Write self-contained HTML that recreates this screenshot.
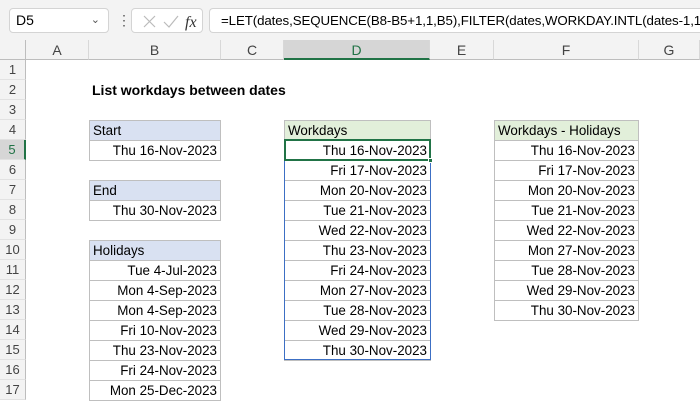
<!DOCTYPE html><html><head><style>
body{margin:0;width:700px;height:400px;overflow:hidden;background:#fff;font-family:"Liberation Sans",sans-serif;position:relative}
div{position:absolute;box-sizing:border-box}
.t{font-size:13px;line-height:19px;white-space:nowrap;color:#000}
.c{border:1px solid #bfbfbf;height:21px;font-size:13.4px;line-height:19px;white-space:nowrap;padding:0 3px}
.r{text-align:right}
.b{background:#d9e1f2}.g{background:#e2efda}
.ch{top:40px;height:20px;font-size:14px;color:#444;text-align:center;line-height:20px;border-right:1px solid #d8d8d8;border-bottom:1px solid #bdbdbd;background:#f3f3f3}
.rh{left:0;width:26px;height:20px;font-size:13px;color:#444;text-align:center;line-height:20px;background:#f3f3f3;border-bottom:1px solid #e2e2e2;border-right:1px solid #bdbdbd}
</style></head><body>
<div style="left:0;top:0;width:700px;height:40px;background:#f3f3f3"></div>
<div style="left:9px;top:8px;width:100px;height:25px;background:#fff;border:1px solid #d4d4d4;border-radius:4px;font-size:14px;line-height:23px;padding-left:6px">D5<span style="position:absolute;right:8px;top:0;font-size:11px;color:#555">&#8964;</span></div>
<div style="left:117px;top:12px;width:4px;height:16px;font-size:14px;line-height:16px;color:#555">&#8942;</div>
<div style="left:131px;top:8px;width:72px;height:25px;background:#fff;border:1px solid #d4d4d4;border-radius:4px">
<svg width="72" height="25" style="position:absolute;left:0;top:0"><path d="M12 7l11 11M23 7L12 18" stroke="#bbb" stroke-width="1.2" fill="none"/><path d="M32 13l5 5 9-11" stroke="#bbb" stroke-width="1.2" fill="none"/><text x="53" y="18" font-family="Liberation Serif" font-style="italic" font-size="16" fill="#333">fx</text></svg></div>
<div style="left:209px;top:8px;width:491px;height:25px;overflow:hidden;background:#fff;border:1px solid #d4d4d4;border-right:none;border-radius:4px 0 0 4px;font-size:13.3px;letter-spacing:-0.1px;line-height:23px;padding-left:11px;white-space:nowrap">=LET(dates,SEQUENCE(B8-B5+1,1,B5),FILTER(dates,WORKDAY.INTL(dates-1,1,1),</div>
<div style="left:0;top:40px;width:26px;height:20px;background:#f3f3f3;border-right:1px solid #bdbdbd;border-bottom:1px solid #bdbdbd"></div>
<div class="ch" style="left:26px;width:63px">A</div>
<div class="ch" style="left:89px;width:132px">B</div>
<div class="ch" style="left:221px;width:63px">C</div>
<div class="ch" style="left:284px;width:146px;background:#d6d6d6;border-bottom:2px solid #217346;color:#217346">D</div>
<div class="ch" style="left:430px;width:64px">E</div>
<div class="ch" style="left:494px;width:145px">F</div>
<div class="ch" style="left:639px;width:61px">G</div>
<div class="rh" style="top:60px">1</div><div class="rh" style="top:80px">2</div><div class="rh" style="top:100px">3</div><div class="rh" style="top:120px">4</div>
<div class="rh" style="top:140px;background:#d6d6d6;border-right:2px solid #217346;color:#217346">5</div>
<div class="rh" style="top:160px">6</div><div class="rh" style="top:180px">7</div><div class="rh" style="top:200px">8</div><div class="rh" style="top:220px">9</div><div class="rh" style="top:240px">10</div><div class="rh" style="top:260px">11</div><div class="rh" style="top:280px">12</div><div class="rh" style="top:300px">13</div><div class="rh" style="top:320px">14</div><div class="rh" style="top:340px">15</div><div class="rh" style="top:360px">16</div><div class="rh" style="top:380px">17</div>
<div class="t" style="left:92px;top:81px;font-weight:bold;font-size:14px">List workdays between dates</div>
<div class="c b" style="left:89px;top:120px;width:132px">Start</div>
<div class="c r" style="left:89px;top:140px;width:132px">Thu 16-Nov-2023</div>
<div class="c b" style="left:89px;top:180px;width:132px">End</div>
<div class="c r" style="left:89px;top:200px;width:132px">Thu 30-Nov-2023</div>
<div class="c b" style="left:89px;top:240px;width:132px">Holidays</div>
<div class="c r" style="left:89px;top:260px;width:132px">Tue 4-Jul-2023</div>
<div class="c r" style="left:89px;top:280px;width:132px">Mon 4-Sep-2023</div>
<div class="c r" style="left:89px;top:300px;width:132px">Mon 4-Sep-2023</div>
<div class="c r" style="left:89px;top:320px;width:132px">Fri 10-Nov-2023</div>
<div class="c r" style="left:89px;top:340px;width:132px">Thu 23-Nov-2023</div>
<div class="c r" style="left:89px;top:360px;width:132px">Fri 24-Nov-2023</div>
<div class="c r" style="left:89px;top:380px;width:132px">Mon 25-Dec-2023</div>
<div class="c g" style="left:284px;top:120px;width:147px">Workdays</div>
<div class="c r" style="left:284px;top:140px;width:147px">Thu 16-Nov-2023</div>
<div class="c r" style="left:284px;top:160px;width:147px">Fri 17-Nov-2023</div>
<div class="c r" style="left:284px;top:180px;width:147px">Mon 20-Nov-2023</div>
<div class="c r" style="left:284px;top:200px;width:147px">Tue 21-Nov-2023</div>
<div class="c r" style="left:284px;top:220px;width:147px">Wed 22-Nov-2023</div>
<div class="c r" style="left:284px;top:240px;width:147px">Thu 23-Nov-2023</div>
<div class="c r" style="left:284px;top:260px;width:147px">Fri 24-Nov-2023</div>
<div class="c r" style="left:284px;top:280px;width:147px">Mon 27-Nov-2023</div>
<div class="c r" style="left:284px;top:300px;width:147px">Tue 28-Nov-2023</div>
<div class="c r" style="left:284px;top:320px;width:147px">Wed 29-Nov-2023</div>
<div class="c r" style="left:284px;top:340px;width:147px">Thu 30-Nov-2023</div>
<div style="left:284px;top:140px;width:147px;height:220px;border:1px solid #3c6fc4;border-top:none"></div>
<div style="left:284px;top:139px;width:147px;height:22px;border:2px solid #217346"></div>
<div style="left:428px;top:158px;width:5px;height:5px;background:#217346;border:1px solid #fff"></div>
<div class="c g" style="left:494px;top:120px;width:145px">Workdays - Holidays</div>
<div class="c r" style="left:494px;top:140px;width:145px">Thu 16-Nov-2023</div>
<div class="c r" style="left:494px;top:160px;width:145px">Fri 17-Nov-2023</div>
<div class="c r" style="left:494px;top:180px;width:145px">Mon 20-Nov-2023</div>
<div class="c r" style="left:494px;top:200px;width:145px">Tue 21-Nov-2023</div>
<div class="c r" style="left:494px;top:220px;width:145px">Wed 22-Nov-2023</div>
<div class="c r" style="left:494px;top:240px;width:145px">Mon 27-Nov-2023</div>
<div class="c r" style="left:494px;top:260px;width:145px">Tue 28-Nov-2023</div>
<div class="c r" style="left:494px;top:280px;width:145px">Wed 29-Nov-2023</div>
<div class="c r" style="left:494px;top:300px;width:145px">Thu 30-Nov-2023</div>
</body></html>
